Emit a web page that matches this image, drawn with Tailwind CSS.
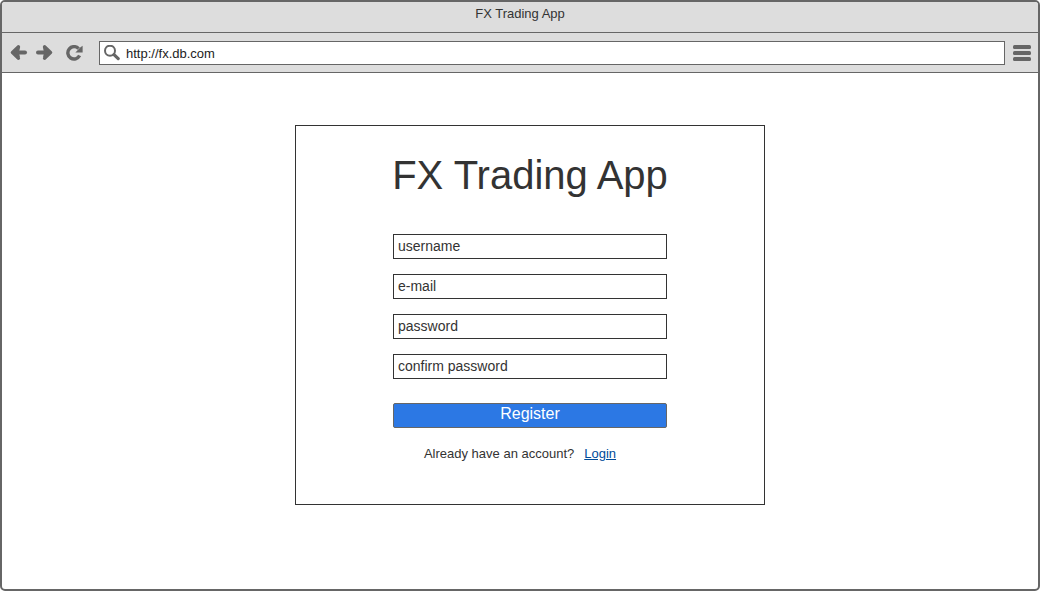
<!DOCTYPE html>
<html lang="en">
<head>
<meta charset="utf-8">
<meta name="viewport" content="width=device-width, initial-scale=1">
<title>FX Trading App</title>
<script src="https://cdn.jsdelivr.net/npm/@tailwindcss/browser@4"></script>
</head>
<body class="bg-white font-['Liberation_Sans',Arial,sans-serif] text-[#333]">
<div class="flex min-h-screen flex-col overflow-hidden rounded-[5px] border-2 border-[#666] bg-white">
  <header class="bg-[#ddd]">
    <div class="h-[31px] border-b border-[#666] pt-0.5 text-center text-[13px] leading-5">FX Trading App</div>
    <div class="flex h-10 items-center border-b border-[#666] pr-[7px] pl-2 text-[#666]">
      <button type="button" aria-label="Back" class="mr-2">
        <svg class="block" width="18" height="16" viewBox="0 0 18 16" fill="none" stroke="currentColor"><path d="M6 7.5H15" stroke-width="4" stroke-linecap="round"/><path d="M2 7.5L8.2 1.4Q9 1.4 8.8 2.2L7.6 7.5L8.8 12.8Q9 13.6 8.2 13.6Z" fill="currentColor" stroke-width="2.6" stroke-linejoin="round"/></svg>
      </button>
      <button type="button" aria-label="Forward" class="mr-3">
        <svg class="block" width="18" height="16" viewBox="0 0 18 16" fill="none" stroke="currentColor"><path d="M2 7.5H11" stroke-width="4" stroke-linecap="round"/><path d="M15 7.5L8.8 1.4Q8 1.4 8.2 2.2L9.4 7.5L8.2 12.8Q8 13.6 8.8 13.6Z" fill="currentColor" stroke-width="2.6" stroke-linejoin="round"/></svg>
      </button>
      <button type="button" aria-label="Reload" class="mr-4">
        <svg class="block" width="17" height="16" viewBox="0 0 17 16" fill="none" stroke="currentColor"><path d="M12.6 3.6A6.2 6.2 0 1 0 13.6 10.6" stroke-width="3.4"/><path d="M16.6 .8V7.6H9.4L11.6 5.2L14.2 2.6Z" fill="currentColor" stroke="none"/></svg>
      </button>
      <label class="flex h-6 min-w-0 flex-1 items-center border border-[#666] bg-white pl-1">
        <svg class="mr-1.5 block shrink-0" width="16" height="16" viewBox="0 0 16 16" fill="none" stroke="currentColor"><circle cx="6" cy="5.7" r="5" stroke-width="2"/><path d="M10 9.6L14.2 13.6" stroke-width="3.2" stroke-linecap="round"/></svg>
        <input type="text" aria-label="Address" value="http://fx.db.com" class="h-full min-w-0 flex-1 pt-0.5 text-[13px] text-[#222] outline-none">
      </label>
      <button type="button" aria-label="Menu" class="ml-2">
        <svg class="block" width="18" height="16" viewBox="0 0 18 16" fill="currentColor"><rect width="18" height="4" rx="1.5"/><rect y="6" width="18" height="4" rx="1.5"/><rect y="12" width="18" height="4" rx="1.5"/></svg>
      </button>
    </div>
  </header>
  <main class="flex flex-1 items-start justify-center pt-[52px] pb-5 pl-5">
    <form class="flex w-full max-w-[470px] flex-col border border-[#333] px-[97px] pt-[25px] pb-10">
      <h1 class="-mx-2 mb-[35px] text-center text-[40px] leading-[48px] whitespace-nowrap">FX Trading App</h1>
      <div class="flex flex-col gap-[15px] text-sm">
        <input type="text" aria-label="username" placeholder="username" class="h-[25px] w-full border border-[#333] px-1 pb-0.5 placeholder:text-[#333]">
        <input type="email" aria-label="e-mail" placeholder="e-mail" class="h-[25px] w-full border border-[#333] px-1 pb-0.5 placeholder:text-[#333]">
        <input type="password" aria-label="password" placeholder="password" class="h-[25px] w-full border border-[#333] px-1 pb-0.5 placeholder:text-[#333]">
        <input type="password" aria-label="confirm password" placeholder="confirm password" class="h-[25px] w-full border border-[#333] px-1 pb-0.5 placeholder:text-[#333]">
      </div>
      <button type="submit" class="mt-6 h-[25px] rounded-[2px] border border-[#666] bg-[#2c78e4] pb-1 text-base leading-5 text-white">Register</button>
      <p class="mt-4 flex justify-center gap-2.5 pr-5 text-[13px] leading-5 whitespace-nowrap"><span>Already have an account?</span><a href="#login" class="text-[#004b99] underline">Login</a></p>
    </form>
  </main>
</div>
</body>
</html>
